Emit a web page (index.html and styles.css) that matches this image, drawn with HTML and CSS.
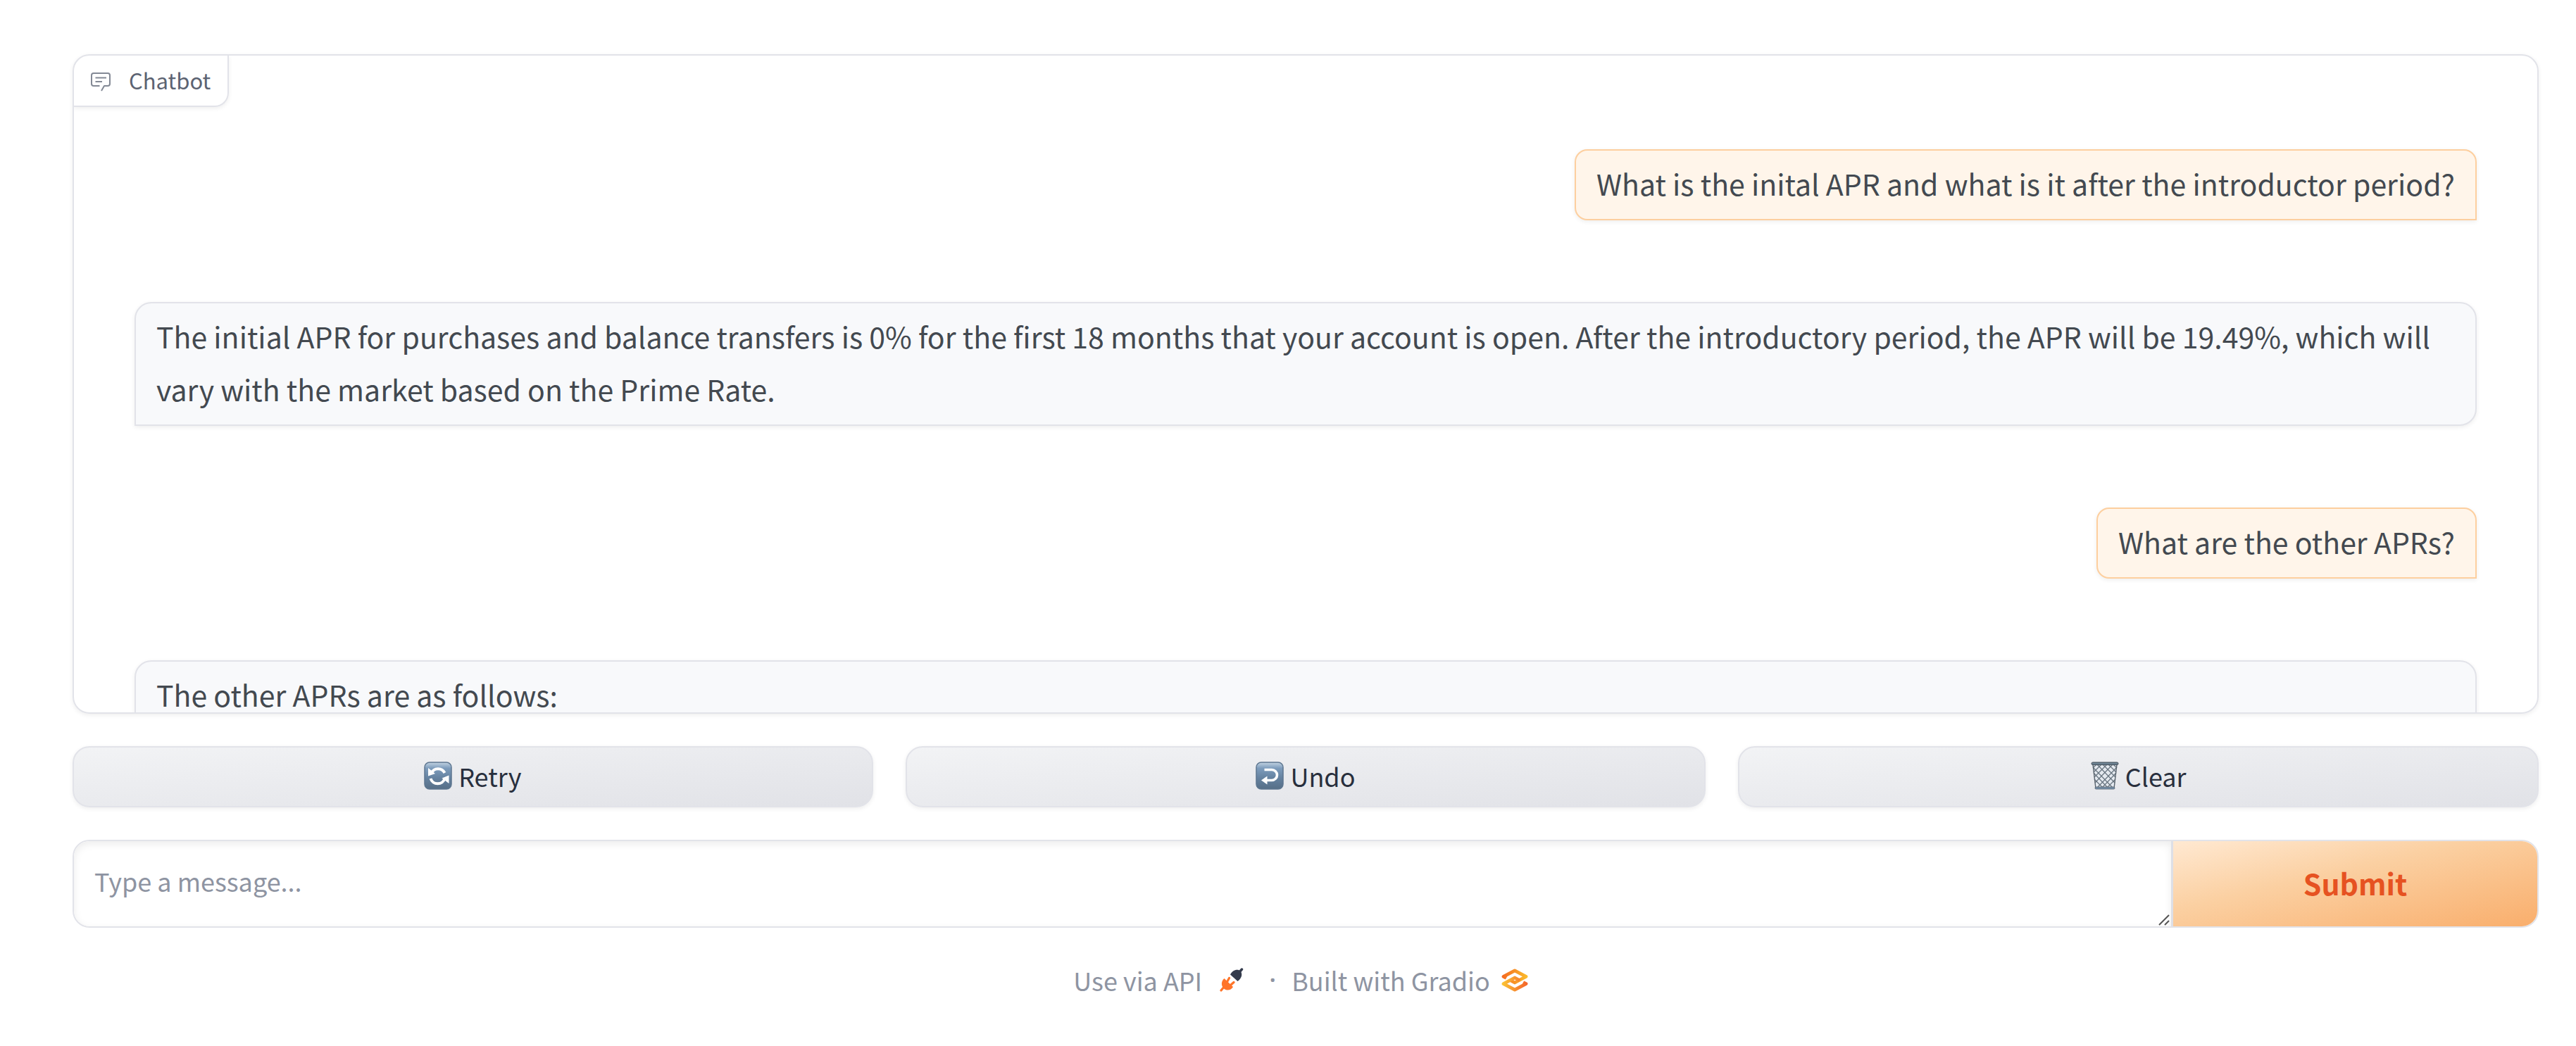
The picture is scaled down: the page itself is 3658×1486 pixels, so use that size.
FILE: index.html
```html
<!DOCTYPE html>
<html lang="en">
<head>
<meta charset="utf-8">
<meta name="viewport" content="width=device-width, initial-scale=1">
<title>Chatbot</title>
<link rel="stylesheet" href="styles.css">
</head>
<body>
<main class="app">
  <section class="chat" aria-label="Chatbot">
    <h1 class="chat-label">
      <svg class="chat-icon" viewBox="0 0 28 27" aria-hidden="true">
        <path d="M12.500 19H4a3 3 0 0 1-3-3V4a3 3 0 0 1 3-3h20a3 3 0 0 1 3 3v12a3 3 0 0 1-3 3h-5l-4 7"/>
        <path d="M6.500 7.500H22M6.500 13H16"/>
      </svg>
      <span class="chat-title">Chatbot</span>
    </h1>
    <div class="messages">
      <p class="message user">What is the inital APR and what is it after the introductor period?</p>
      <p class="message bot">The initial APR for purchases and balance transfers is 0% for the first 18 months that your account is open. After the introductory period, the APR will be 19.49%, which will vary with the market based on the Prime Rate.</p>
      <p class="message user">What are the other APRs?</p>
      <p class="message bot">The other APRs are as follows:</p>
    </div>
  </section>

  <div class="actions">
    <button type="button" class="action">
      <svg class="action-icon" viewBox="0 0 40 40" aria-hidden="true">
        <defs><linearGradient id="tile" x1="0" y1="0" x2="0" y2="1"><stop offset="0" stop-color="#c3d3e2"/><stop offset=".22" stop-color="#7d9cbc"/><stop offset=".6" stop-color="#64819f"/><stop offset="1" stop-color="#566f87"/></linearGradient></defs>
        <rect x="1" y="1" width="38" height="38" rx="7" fill="url(#tile)" stroke="#5d7690" stroke-width="1.500"/>
        <path d="M10.500 16.500A10.500 10.500 0 0 1 29.500 16M29.500 24A10.500 10.500 0 0 1 9.500 24" fill="none" stroke="#fff" stroke-width="4"/>
        <path d="M6 9v11.500L16 17zM35.500 19.500V31L25.500 23.500z" fill="#fff"/>
      </svg>
      Retry
    </button>
    <button type="button" class="action">
      <svg class="action-icon" viewBox="0 0 40 40" aria-hidden="true">
        <rect x="1" y="1" width="38" height="38" rx="7" fill="url(#tile)" stroke="#5d7690" stroke-width="1.500"/>
        <path d="M12.500 11.500H23a7.500 7.500 0 0 1 0 15H15" fill="none" stroke="#fff" stroke-width="3.600"/>
        <path d="M8 26.500 16.500 20.500v12z" fill="#fff"/>
      </svg>
      Undo
    </button>
    <button type="button" class="action">
      <svg class="action-icon" viewBox="0 0 40 40" aria-hidden="true">
        <path d="M2.500 4h35L33 38H7z" fill="#e4e9ef"/>
        <path d="M3 8 31 37M9 4 34 30M17 4 35 22M25 4 36 15M32 4 37 9M4 16 24 37M5 25 17 37M37 8 9 37M31 4 6 30M23 4 5 22M15 4 4 15M8 4 3 9M36 16 16 37M35 25 23 37" fill="none" stroke="#68747f" stroke-width="1.200"/>
        <path d="M3 4 7 38M37 4 33 38" stroke="#59636d" stroke-width="1.400"/>
        <rect x="1" y="1" width="38" height="3.600" rx="1.800" fill="#6d8292" stroke="#3f4a55"/>
        <rect x="6" y="36" width="28" height="3" rx="1.500" fill="#7792ab" stroke="#56616c" stroke-width=".8"/>
      </svg>
      Clear
    </button>
  </div>

  <form class="composer">
    <label class="composer-field">
      <textarea class="composer-input" rows="1" placeholder="Type a message..." aria-label="Message"></textarea>
      <svg class="grip" viewBox="0 0 16 16" aria-hidden="true"><path d="M1 15 15 1M9 15l6-6"/></svg>
    </label>
    <button type="button" class="submit">Submit</button>
  </form>

  <footer class="footer">
    <a class="footer-link api" href="#api">Use via API
      <svg class="plug-icon" viewBox="0 0 34 34" aria-hidden="true">
        <path d="M31.500 2 28 6" stroke="#343b4c" stroke-width="3.500" stroke-linecap="round"/>
        <path d="M15 9.500c3-6 10-9 14.500-5C33 9 31 15 25.500 19z" fill="#343b4c"/>
        <path d="M13.500 14.500 11 19M20 20.500 16 24M2 32l5-6" stroke="#ff7429" stroke-width="3.200" stroke-linecap="round"/>
        <path d="M6.500 15 19 27c-3 5-9 6-13 2.500C1.500 25 2 19 6.500 15z" fill="#ff7429"/>
      </svg>
    </a>
    <span class="dot">·</span>
    <a class="footer-link gradio" href="#gradio">Built with Gradio
      <svg class="gradio-icon" viewBox="0 0 38 33" aria-hidden="true">
        <defs>
          <linearGradient id="warm" gradientUnits="userSpaceOnUse" x1="0" y1="8" x2="38" y2="12"><stop offset="0" stop-color="#f5661f"/><stop offset="1" stop-color="#fbc02d"/></linearGradient>
          <linearGradient id="cool" gradientUnits="userSpaceOnUse" x1="0" y1="20" x2="38" y2="24"><stop offset="0" stop-color="#fbc835"/><stop offset="1" stop-color="#f4602a"/></linearGradient>
        </defs>
        <path d="M7 13.500 3 11.300 19 2.800l16 8.500L19 20l-7-3.800" fill="none" stroke="url(#warm)" stroke-width="4.800" stroke-linejoin="round"/>
        <path d="M31 19.500 35 21.700 19 30.200 3 21.700 19 13l7 3.800" fill="none" stroke="url(#cool)" stroke-width="4.800" stroke-linejoin="round"/>
      </svg>
    </a>
  </footer>
</main>
</body>
</html>
```
FILE: styles.css
```css
:root {
  --border: #e2e3e9;
  --gap: 46px;
  --radius: 24px;
  --shadow: 0 2px 6px rgba(0, 0, 0, .07);
  --text: #434950;
  --muted: #8e94a2;
}

* { box-sizing: border-box; }

body {
  margin: 0;
  background: #fff;
  color: var(--text);
  font-family: "Noto Sans CJK SC", "Noto Sans", sans-serif;
}

.app {
  display: flex;
  flex-direction: column;
  gap: var(--gap);
  padding: 77px 53px 46px 103px;
}

.chat {
  position: relative;
  height: 937px;
  overflow: hidden;
  border: 2px solid var(--border);
  border-radius: var(--radius);
  box-shadow: var(--shadow);
}

.chat-label {
  position: absolute;
  top: 0;
  left: 0;
  display: flex;
  align-items: center;
  gap: 26px;
  height: 73px;
  margin: 0;
  padding: 0 24px;
  border: solid var(--border);
  border-width: 0 2px 2px 0;
  border-radius: 0 0 20px 0;
  box-shadow: var(--shadow);
  color: #5c6372;
  font-size: 31px;
  font-weight: 400;
  line-height: 48px;
}

.chat-title { padding-bottom: 2px; }

.chat-icon {
  width: 28px;
  height: 27px;
  margin-top: 4px;
  fill: none;
  stroke: #838995;
  stroke-width: 2;
  stroke-linejoin: round;
}

.messages {
  display: flex;
  flex-direction: column;
  gap: 116px;
  padding: 133px 86px 0;
}

.message {
  margin: 0;
  padding: 9px 29px 13px;
  border: 2px solid;
  box-shadow: var(--shadow);
  font-size: 41px;
  line-height: 75px;
}

.user {
  align-self: flex-end;
  border-color: #fdcf9f;
  border-radius: 18px 18px 0 18px;
  background: #fff5ea;
}

.bot {
  border-color: var(--border);
  border-radius: var(--radius) var(--radius) var(--radius) 0;
  background: #f8f9fb;
}

.actions {
  display: grid;
  grid-template-columns: repeat(3, 1fr);
  gap: var(--gap);
}

.action {
  display: flex;
  align-items: center;
  justify-content: center;
  gap: 9px;
  height: 87px;
  padding: 0 0 4px;
  border: 2px solid var(--border);
  border-radius: var(--radius);
  background: linear-gradient(to bottom right, #f2f3f5, #e1e2e7);
  box-shadow: var(--shadow);
  color: #282f3d;
  font: 400 36px/56px "Noto Sans CJK SC", "Noto Sans", sans-serif;
}

.action-icon {
  width: 40px;
  height: 40px;
}

.composer {
  display: flex;
  height: 125px;
  overflow: hidden;
  border: 2px solid var(--border);
  border-radius: var(--radius);
}

.composer-field {
  position: relative;
  display: flex;
  flex: 1;
  min-width: 0;
}

.composer-input {
  flex: 1;
  min-width: 0;
  padding: 28px 29px;
  border: 0;
  border-radius: 22px 0 0 22px;
  outline: 0;
  background: #fff;
  box-shadow: inset 0 4px 12px rgba(0, 0, 0, .08);
  color: var(--text);
  font: 400 36px/56px "Noto Sans CJK SC", "Noto Sans", sans-serif;
  resize: none;
}

.composer-input::placeholder { color: var(--muted); opacity: 1; }

.grip {
  position: absolute;
  right: 2px;
  bottom: 1px;
  width: 16px;
  height: 16px;
  stroke: #555;
  stroke-width: 2;
}

.submit {
  width: 520px;
  padding: 0 0 4px;
  border: 0;
  border-left: 3px solid #dddfe6;
  background: linear-gradient(to bottom right, #ffe9d2, #fbd0a2 40%, #f9ae6c);
  color: #e65221;
  font: 700 41px/60px "Noto Sans CJK SC", "Noto Sans", sans-serif;
}

.footer {
  display: flex;
  align-items: center;
  justify-content: center;
  padding-right: 14px;
  color: var(--muted);
  font-size: 36px;
  line-height: 56px;
}

.footer-link {
  display: flex;
  align-items: center;
  color: inherit;
  text-decoration: none;
}

.api { gap: 25px; }
.gradio { gap: 16px; }

.dot {
  width: 68px;
  padding-left: 14px;
  font-family: "Open Sans", sans-serif;
  font-weight: 600;
  text-align: center;
}

.plug-icon { width: 34px; height: 34px; }
.gradio-icon { width: 38px; height: 33px; }
```
